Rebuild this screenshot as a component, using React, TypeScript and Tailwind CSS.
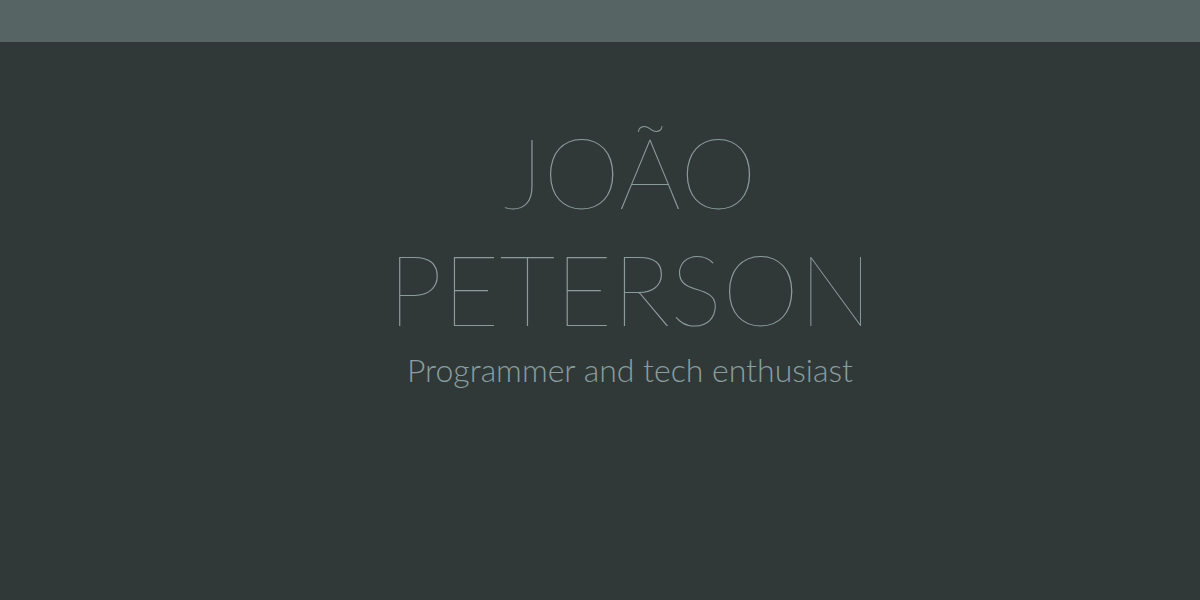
export default function App() {
  return (
    <div className="flex h-[600px] w-full flex-col bg-[#303938] font-['Lato','Open_Sans',sans-serif]">
      <div className="h-[42px] w-full bg-[#566463]" />
      <main className="flex flex-col items-center pl-[60px] pt-[71px] text-center">
        <h1 className="text-[98px] font-thin uppercase leading-[117px] text-[#8b9b9a]">
          João
          <br />
          Peterson
        </h1>
        <p className="text-[32px] font-light leading-[46px] text-[#8a9d9f]">Programmer and tech enthusiast</p>
      </main>
    </div>
  );
}
